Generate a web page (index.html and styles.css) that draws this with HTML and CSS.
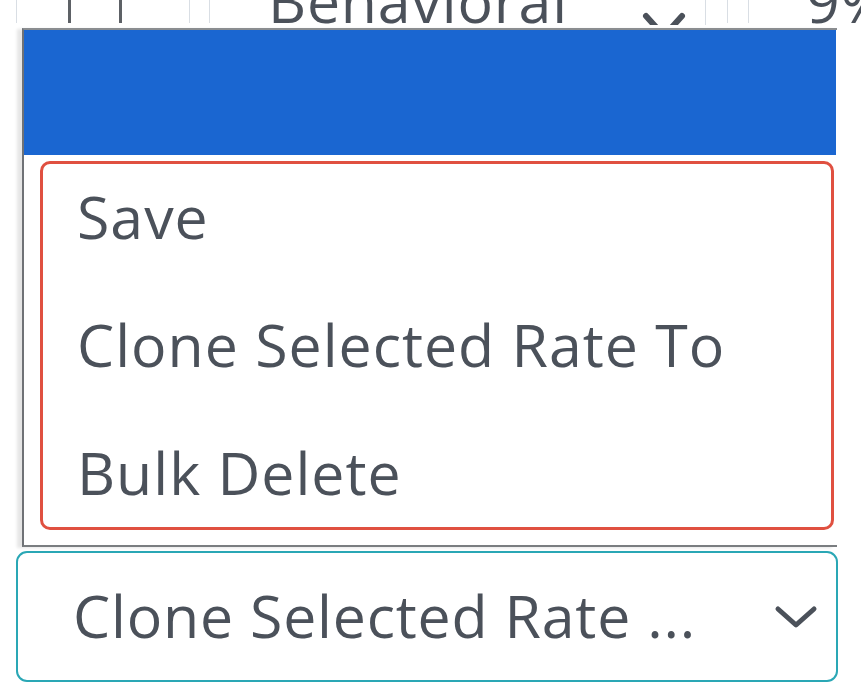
FILE: index.html
```html
<!DOCTYPE html>
<html lang="en">
<head>
  <meta charset="UTF-8" />
  <title>Rate Actions</title>
  <link rel="stylesheet" href="styles.css">
</head>
<body>
  <div class="grid-row">
    <div class="cell cell-a"></div>
    <div class="cell cell-b dark"></div>
    <div class="cell cell-c dark"></div>
    <div class="cell cell-d"></div>
    <div class="cell cell-e"></div>
    <div class="cell cell-type">
      <span class="cell-text">Behavioral</span>
      <svg class="cell-chevron" width="44" height="40" viewBox="0 0 44 40">
        <polyline points="4,14 22,34 40,14" fill="none" stroke="#4b515a" stroke-width="6" stroke-linecap="round" stroke-linejoin="round"/>
      </svg>
    </div>
    <div class="cell cell-g"></div>
    <div class="cell cell-h"></div>
    <div class="cell cell-rate">
      <span class="cell-text">9%</span>
    </div>
  </div>

  <div class="menu">
    <div class="menu-head"></div>
    <div class="menu-body">
      <ul class="menu-list">
        <li>Save</li>
        <li>Clone Selected Rate To</li>
        <li>Bulk Delete</li>
      </ul>
    </div>
  </div>

  <div class="action-select">
    <span class="action-label">Clone Selected Rate ...</span>
    <svg class="action-chevron" width="44" height="24" viewBox="0 0 44 24">
      <polyline points="4,4 22,20 40,4" fill="none" stroke="#4b515a" stroke-width="5" stroke-linecap="round" stroke-linejoin="round"/>
    </svg>
  </div>
</body>
</html>
```

FILE: styles.css
```css
* {
  margin: 0;
  padding: 0;
  box-sizing: border-box;
  font-family: 'Open Sans', 'Noto Sans', sans-serif;
}
body {
  background: #fff;
  color: #4b515a;
  width: 861px;
  height: 700px;
  overflow: hidden;
}
.grid-row {
  display: flex;
  height: 26px;
  overflow: hidden;
}
.cell {
  height: 23px;
  border-right: 1px solid #d9dee4;
  flex-shrink: 0;
}
.cell.dark {
  border-right: 3px solid #5d6166;
}
.cell-a { width: 17px; }
.cell-b { width: 54px; }
.cell-c { width: 51px; }
.cell-d { width: 68px; }
.cell-e { width: 20px; }
.cell-type {
  width: 496px;
  height: 25px;
  display: flex;
  align-items: flex-start;
  overflow: hidden;
  padding-left: 58px;
}
.cell-g { width: 22px; }
.cell-h { width: 21px; }
.cell-rate {
  flex: 1;
  height: 26px;
  border-right: none;
  padding-left: 57px;
}
.cell-text {
  display: block;
  font-size: 59px;
  line-height: 59px;
  letter-spacing: 0.8px;
  margin-top: -29px;
  white-space: nowrap;
}
.cell-chevron {
  display: block;
  flex-shrink: 0;
  width: 44px;
  height: 40px;
  margin-left: 74px;
  margin-top: 2px;
}
.menu {
  margin-left: 22px;
  width: 815px;
  border-top: 2px solid #8a8d90;
  border-left: 2px solid #6f7276;
  border-bottom: 2px solid #7a7d80;
  box-shadow: -5px 1px 3px rgba(0, 0, 0, 0.1);
  margin-top: 2px;
}
.menu-head {
  height: 125px;
  background: #1a66d1;
  width: 812px;
}
.menu-body {
  padding: 6px 3px 15px 16px;
}
.menu-list {
  list-style: none;
  border: 3px solid #e05040;
  border-radius: 10px;
  padding: 23px 0 25px 34px;
  display: flex;
  flex-direction: column;
  gap: 69px;
}
.menu-list li {
  font-size: 59px;
  line-height: 59px;
  letter-spacing: 1px;
  white-space: nowrap;
}
.action-select {
  margin: 4px 0 0 16px;
  width: 822px;
  height: 131px;
  border: 2px solid #2aa7b5;
  border-radius: 11px;
  display: flex;
  align-items: center;
  justify-content: space-between;
  padding: 0 18px 2px 55px;
}
.action-label {
  font-size: 59px;
  line-height: 59px;
  letter-spacing: 0.8px;
  white-space: nowrap;
}
.action-chevron {
  margin-top: 2px;
}
```
